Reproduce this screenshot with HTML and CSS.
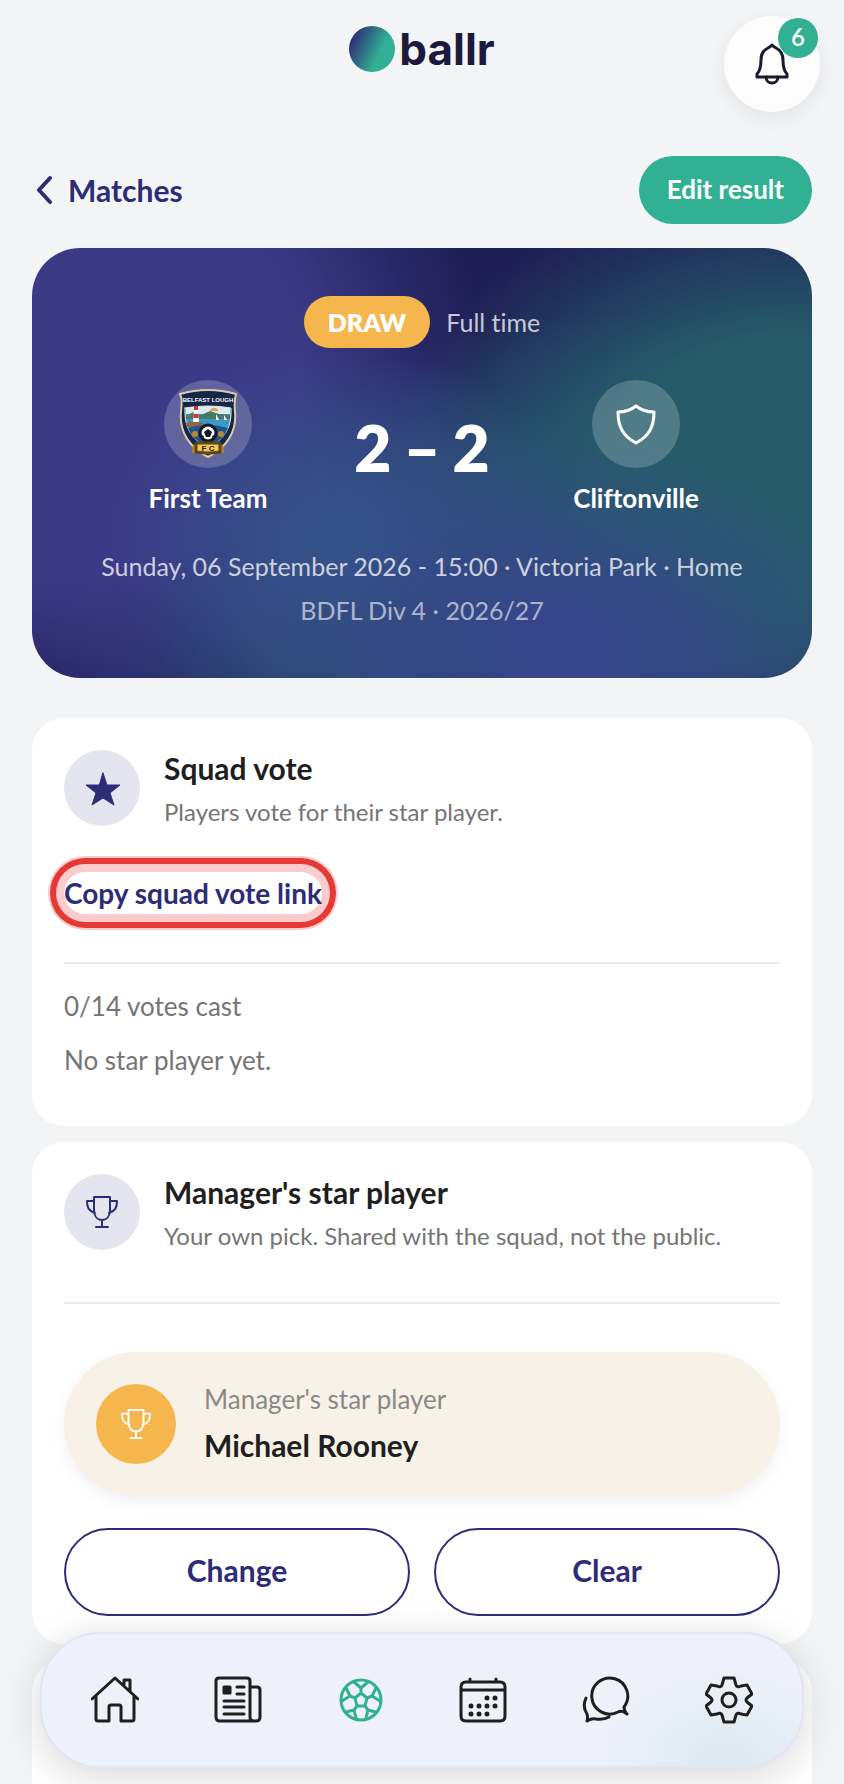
FILE: index.html
```html
<!DOCTYPE html>
<html lang="en">
<head>
  <meta charset="utf-8">
  <meta name="viewport" content="width=device-width, initial-scale=1">
  <title>ballr - Match</title>
  <link rel="stylesheet" href="styles.css">
</head>
<body>

<!-- shared icons -->
<svg class="sprite" aria-hidden="true">
  <symbol id="trophy" viewBox="0 0 34 34">
    <path d="M9 2h16v13c0 6-3 10-8 10s-8-4-8-10zM9 6H2c0 7 2 10 8 12M25 6h7c0 7-2 10-8 12M17 25v7M11 32h12"/>
  </symbol>
</svg>

<div class="app">
  <header class="topbar">
    <a class="logo" href="#"><span class="logo-ball"></span>ballr</a>
    <button class="bell" aria-label="Notifications">
      <svg width="36" height="44" viewBox="0 0 36 44" aria-hidden="true">
        <path d="M18 3c-1 1-2 2-4 3-4 2-7 6-7 12 0 8-1 11-4 14v3h30v-3c-3-3-4-6-4-14 0-6-3-10-7-12-2-1-3-2-4-3z"/>
        <path d="M12 35c0 8 12 8 12 0"/>
      </svg>
      <span class="badge">6</span>
    </button>
  </header>

  <main>
    <div class="page-head">
      <a class="back" href="#">
        <svg width="20" height="30" viewBox="0 0 20 30" aria-hidden="true"><path d="M18 3 7 15l11 12"/></svg>
        Matches
      </a>
      <button class="btn-edit">Edit result</button>
    </div>

    <section class="hero">
      <div class="status">
        <span class="pill">DRAW</span>
        <span class="status-text">Full time</span>
      </div>
      <div class="scoreline">
        <div class="team">
          <div class="crest">
            <svg width="60" height="70" viewBox="0 0 60 70" aria-hidden="true">
              <path d="M2 5Q30-3 58 5q-2 7-1 18c2 20-9 36-27 45C12 59 1 43 3 23 4 12 4 9 2 5z" fill="#14264a" stroke="#d5cda1" stroke-width="2"/>
              <path d="M7 19q23-4 46 0c1 19-6 31-23 40C13 50 6 38 7 19z" fill="#3a9ac4" stroke="#eee7c8" stroke-width="1"/>
              <path d="M8 19q22-4 44 0v6H8z" fill="#dbeaf0"/>
              <path d="M8 27l7-4 8 3 9-4 9 3 11 1v4H8z" fill="#4b7865"/>
              <path d="M32 22a4 3 0 0 1 8 0z" fill="#ef9b3e"/>
              <path d="M8 34q8-4 19 1l-7 3H9z" fill="#8e6546"/>
              <path d="M16 20h4l1 13h-6z" fill="#fff"/>
              <path d="M16 17h4v4h-4zM15.500 25h5v4h-5z" fill="#cf3038"/>
              <path d="M10 39q20-6 40 0-5 13-20 19-15-6-20-19z" fill="#1d5688"/>
              <path d="M38 31v-6l3 6zM46 31v-5l3 5z" fill="#fff"/>
              <circle cx="30" cy="44" r="8" fill="#f7f7f7" stroke="#111827"/>
              <path d="m30 40 4 3-2 5h-4l-2-5zM24 39l3-3 1 2zM36 39l-3-3-1 2zM23 46l3 1-1 3zM37 46l-3 1 1 3zM28 51h4l-2 1z" fill="#111827"/>
              <circle cx="17" cy="45" r="3" fill="#b8883b"/>
              <circle cx="43" cy="45" r="3" fill="#b8883b"/>
              <path d="M15 56l4-1v8l-5 1zM45 56l-4-1v8l5 1z" fill="#b98628"/>
              <path d="M18 54h24v9q-12 2-24 0z" fill="#f1c756" stroke="#5d4519"/>
              <text x="30" y="13" class="crest-name">BELFAST LOUGH</text>
              <text x="30" y="62" class="crest-fc">F C</text>
            </svg>
          </div>
          <div class="team-name">First Team</div>
        </div>
        <div class="score"><span>2</span><span>–</span><span>2</span></div>
        <div class="team">
          <div class="crest">
            <svg class="shield" width="44" height="44" viewBox="0 0 44 44" aria-hidden="true">
              <path d="M22 4c-5 4-11 6-18 6 0 15 5 24 18 31 13-7 18-16 18-31-7 0-13-2-18-6z"/>
            </svg>
          </div>
          <div class="team-name">Cliftonville</div>
        </div>
      </div>
      <div class="meta">Sunday, 06 September 2026 - 15:00 · Victoria Park · Home</div>
      <div class="meta meta-league">BDFL Div 4 · 2026/27</div>
    </section>

    <section class="card">
      <div class="card-head">
        <div class="card-icon">
          <svg class="star" width="38" height="38" viewBox="0 0 38 38" aria-hidden="true">
            <path d="m20 4 4 12h13L27 24l4 12-11-7-11 7 4-12L3 16h13z"/>
          </svg>
        </div>
        <div>
          <h2>Squad vote</h2>
          <p>Players vote for their star player.</p>
        </div>
      </div>
      <button class="copy-link">Copy squad vote link</button>
      <div class="votes">
        <p>0/14 votes cast</p>
        <p>No star player yet.</p>
      </div>
    </section>

    <section class="card">
      <div class="card-head">
        <div class="card-icon">
          <svg class="trophy" width="34" height="36"><use href="#trophy"/></svg>
        </div>
        <div>
          <h2>Manager's star player</h2>
          <p>Your own pick. Shared with the squad, not the public.</p>
        </div>
      </div>
      <div class="pick">
        <div class="award">
          <div class="award-icon">
            <svg class="trophy" width="32" height="34"><use href="#trophy"/></svg>
          </div>
          <div class="award-text">
            <div class="award-label">Manager's star player</div>
            <div class="award-name">Michael Rooney</div>
          </div>
        </div>
        <div class="actions">
          <button>Change</button>
          <button>Clear</button>
        </div>
      </div>
    </section>

    <section class="card card-next"></section>
  </main>
</div>

<nav class="tabbar" aria-label="Main">
  <a href="#" aria-label="Home">
    <svg viewBox="0 0 48 48">
      <path d="M1 23 24 2l23 21M5 20v23q0 2 2 2h11V31q0-2 2-2h8q2 0 2 2v14h11q2 0 2-2V20M33 9V4h6v11"/>
    </svg>
  </a>
  <a href="#" aria-label="News">
    <svg viewBox="0 0 48 48">
      <path d="M36 41V5q0-3-3-3H5Q2 2 2 5v36q0 4 4 4h36q4 0 4-4V14q0-3-3-3h-7M36 41q0 4 4 4M23 11h7M23 18h7M10 25h20M10 31h20M10 38h20"/>
      <path class="solid" d="M10 11h6v6h-6z"/>
    </svg>
  </a>
  <a class="active" href="#" aria-label="Matches">
    <svg viewBox="0 0 48 48">
      <circle cx="24" cy="24" r="20"/>
      <path d="m24 17 6 5-2 8h-8l-2-8zM24 17v-5M30 22l5-2M28 30l3 4M20 30l-3 4M18 22l-5-2M24 12l-7-6M24 12l7-6M35 20l4-8M35 20l8 5M13 20l-4-8M13 20l-8 5M31 34l8 2M31 34l-2 8M17 34l-8 2M17 34l2 8"/>
    </svg>
  </a>
  <a href="#" aria-label="Calendar">
    <svg viewBox="0 0 48 48">
      <path d="M7 6h34q5 0 5 5v29q0 5-5 5H7q-5 0-5-5V11q0-5 5-5zM2 14h44M11 6V3M37 6V3"/>
      <path class="dots" d="M28 22h0M36 22h0M12 30h0M20 30h0M28 30h0M36 30h0M12 38h0M20 38h0M28 38h0"/>
    </svg>
  </a>
  <a href="#" aria-label="Chat">
    <svg viewBox="0 0 48 48">
      <path d="M42 31A18 18 0 1 0 36 36q4-2 9 2-3-3-3-7zM4 22q-4 9 1 16 1 4 0 7 5-3 9-2 8 1 13-2"/>
    </svg>
  </a>
  <a href="#" aria-label="Settings">
    <svg viewBox="0 0 48 48">
      <path d="M19 2h10l2 7q1 3 5 1l6-1 5 9-5 4q-2 2 0 4l5 4-5 9-6-1q-4-2-5 1l-2 7H19l-2-7q-1-3-5-1l-6 1-5-9 5-4q2-2 0-4l-5-4 5-9 6 1q4 2 5-1z"/>
      <circle cx="24" cy="24" r="7"/>
    </svg>
  </a>
</nav>

</body>
</html>
```
FILE: styles.css
```css
* {
  box-sizing: border-box;
}

body {
  margin: 0;
  background-color: #f2f4f6;
  color: #1f1f1f;
  font-family: Lato, sans-serif;
  font-size: 26px;
  font-variant-ligatures: none;
}

h2, p {
  margin: 0;
}

a {
  color: inherit;
  text-decoration: none;
}

button {
  font: inherit;
  border: none;
  padding: 0;
  cursor: pointer;
}

svg {
  fill: none;
  stroke: currentColor;
  stroke-width: 3;
  stroke-linecap: round;
  stroke-linejoin: round;
}

.sprite {
  display: none;
}

.app {
  display: flex;
  flex-direction: column;
  min-height: 100vh;
}

/* top bar */
.topbar {
  display: grid;
  grid-template-columns: 1fr auto 1fr;
  align-items: start;
  padding: 16px 24px 44px;
}

.logo {
  grid-column: 2;
  display: flex;
  align-items: center;
  gap: 4px;
  height: 66px;
  color: #1b1a3d;
  font-family: Inter, sans-serif;
  font-size: 44px;
  font-weight: 700;
}

.logo-ball {
  width: 46px;
  height: 46px;
  border-radius: 50%;
  background: linear-gradient(115deg, #2d2c77 12%, #31b093 65%);
}

.bell {
  position: relative;
  justify-self: end;
  display: grid;
  place-items: center;
  width: 96px;
  height: 96px;
  border-radius: 50%;
  background-color: #fcfcfd;
  color: #1b1a2d;
  box-shadow: 0 6px 20px rgba(0, 0, 0, 0.07);
}

.badge {
  position: absolute;
  top: 2px;
  right: 2px;
  width: 40px;
  height: 40px;
  border-radius: 50%;
  background-color: #31b093;
  color: #fff;
  font-size: 24px;
  font-weight: 600;
  line-height: 38px;
}

/* page */
main {
  flex: 1;
  display: flex;
  flex-direction: column;
  padding: 0 32px;
}

.page-head {
  display: flex;
  align-items: center;
  justify-content: space-between;
  margin-bottom: 24px;
}

.back {
  display: flex;
  align-items: center;
  gap: 16px;
  color: #2d2c77;
  font-size: 30px;
  font-weight: 700;
}

.back svg {
  stroke-width: 4;
}

.btn-edit {
  height: 68px;
  padding: 0 28px 2px;
  border-radius: 34px;
  background-color: #31b093;
  color: #fff;
  font-weight: 700;
}

/* match summary */
.hero {
  margin-bottom: 40px;
  padding: 48px 32px 50px;
  border-radius: 48px;
  background:
    radial-gradient(ellipse 40% 48% at 68% 92%, #37468a 15%, transparent 100%),
    radial-gradient(ellipse 30% 45% at 40% 68%, #35568a 0%, transparent 100%),
    radial-gradient(ellipse 52% 85% at 6% 30%, #3b3a87 55%, transparent 100%),
    radial-gradient(ellipse 52% 68% at 98% 52%, #265c6a 45%, transparent 100%),
    radial-gradient(ellipse 40% 60% at 42% 85%, #28496e 30%, transparent 100%),
    radial-gradient(ellipse 50% 60% at 75% 75%, #2c4c78 20%, transparent 100%),
    #1f1e55;
  color: #fff;
  text-align: center;
}

.status {
  display: flex;
  align-items: center;
  justify-content: center;
  gap: 16px;
  margin-bottom: 32px;
}

.pill {
  padding: 0 24px;
  border-radius: 26px;
  background-color: #f5b64e;
  font-size: 25px;
  font-weight: 800;
  line-height: 52px;
}

.status-text {
  color: rgba(255, 255, 255, 0.75);
  font-size: 25px;
}

.scoreline {
  display: grid;
  grid-template-columns: 1fr 140px 1fr;
  align-items: center;
}

.team {
  display: flex;
  flex-direction: column;
  align-items: center;
  gap: 12px;
}

.crest {
  display: grid;
  place-items: center;
  width: 88px;
  height: 88px;
  border-radius: 50%;
  background-color: rgba(255, 255, 255, 0.2);
}

.crest svg {
  stroke: none;
}

.crest .shield {
  stroke: #fff;
}

.crest text {
  text-anchor: middle;
  font-family: "Liberation Sans", sans-serif;
  font-weight: 700;
}

.crest-name {
  fill: #fff;
  font-size: 6px;
}

.crest-fc {
  fill: #2c250f;
  font-size: 8px;
}

.team-name {
  font-weight: 700;
  line-height: 36px;
}

.score {
  display: flex;
  justify-content: center;
  gap: 12px;
  font-size: 64px;
  font-weight: 800;
  line-height: 60px;
}

.meta {
  margin-top: 32px;
  color: rgba(255, 255, 255, 0.75);
  font-size: 25px;
  line-height: 36px;
}

.meta-league {
  margin-top: 8px;
  color: rgba(255, 255, 255, 0.6);
}

/* cards */
.card {
  margin-bottom: 16px;
  padding: 32px 32px 28px;
  border-radius: 32px;
  background-color: #fff;
}

.card-head {
  display: flex;
  gap: 24px;
  min-height: 80px;
}

.card-icon {
  display: grid;
  place-items: center;
  flex: none;
  width: 76px;
  height: 76px;
  border-radius: 50%;
  background-color: #e5e5f0;
  color: #2d2c77;
}

.star {
  fill: currentColor;
  stroke-width: 1;
}

.trophy {
  stroke-width: 2;
}

.card h2 {
  font-size: 30px;
  font-weight: 700;
  line-height: 36px;
}

.card-head p {
  margin-top: 8px;
  color: #757575;
  font-size: 24px;
  line-height: 36px;
}

.copy-link {
  margin-top: 42px;
  border-radius: 21px;
  background-color: #fff;
  color: #2d2c77;
  font-size: 28px;
  font-weight: 700;
  line-height: 42px;
  box-shadow: 0 0 0 8px #facccb, 0 0 0 14px #e53935, 0 0 0 16px #facccb;
}

.votes {
  margin-top: 48px;
  padding: 24px 0 20px;
  border-top: 2px solid #ececee;
  color: #757575;
}

.votes p {
  line-height: 36px;
}

.votes p + p {
  margin-top: 18px;
}

.pick {
  margin-top: 48px;
  padding-top: 48px;
  border-top: 2px solid #ececee;
}

.award {
  display: flex;
  align-items: center;
  gap: 28px;
  height: 144px;
  padding: 0 32px;
  border-radius: 72px;
  background-color: #f8f1e7;
  box-shadow: 0 6px 16px rgba(0, 0, 60, 0.06);
}

.award-icon {
  display: grid;
  place-items: center;
  width: 80px;
  height: 80px;
  border-radius: 50%;
  background-color: #f5b64e;
  color: #fff;
}

.award-text {
  padding-bottom: 4px;
}

.award-label {
  color: #8b8987;
  line-height: 46px;
}

.award-name {
  font-size: 30px;
  font-weight: 700;
  line-height: 46px;
}

.actions {
  display: flex;
  gap: 24px;
  margin-top: 32px;
}

.actions button {
  flex: 1;
  height: 88px;
  padding-bottom: 4px;
  border: 2px solid #2d2c77;
  border-radius: 44px;
  background-color: #fff;
  color: #2d2c77;
  font-size: 30px;
  font-weight: 700;
}

.card-next {
  flex: 1;
  margin-bottom: 0;
  border-radius: 32px 32px 0 0;
}

/* bottom navigation */
.tabbar {
  position: fixed;
  right: 40px;
  bottom: 16px;
  left: 40px;
  display: flex;
  align-items: center;
  justify-content: space-around;
  height: 136px;
  padding: 0 12px;
  border: 2px solid #e2e4f0;
  border-radius: 60px;
  background:
    radial-gradient(ellipse 130px 90px at 90% 95%, #dfebf0 15%, transparent 100%),
    #eef0fa;
  color: #1f1f1f;
  box-shadow: 0 8px 40px rgba(0, 0, 0, 0.16);
}

.tabbar a {
  display: grid;
  place-items: center;
  width: 72px;
  height: 72px;
}

.tabbar svg {
  width: 48px;
  height: 48px;
}

.tabbar .active {
  color: #31b093;
}

.solid {
  fill: currentColor;
}

.dots {
  stroke-width: 5;
}
```
